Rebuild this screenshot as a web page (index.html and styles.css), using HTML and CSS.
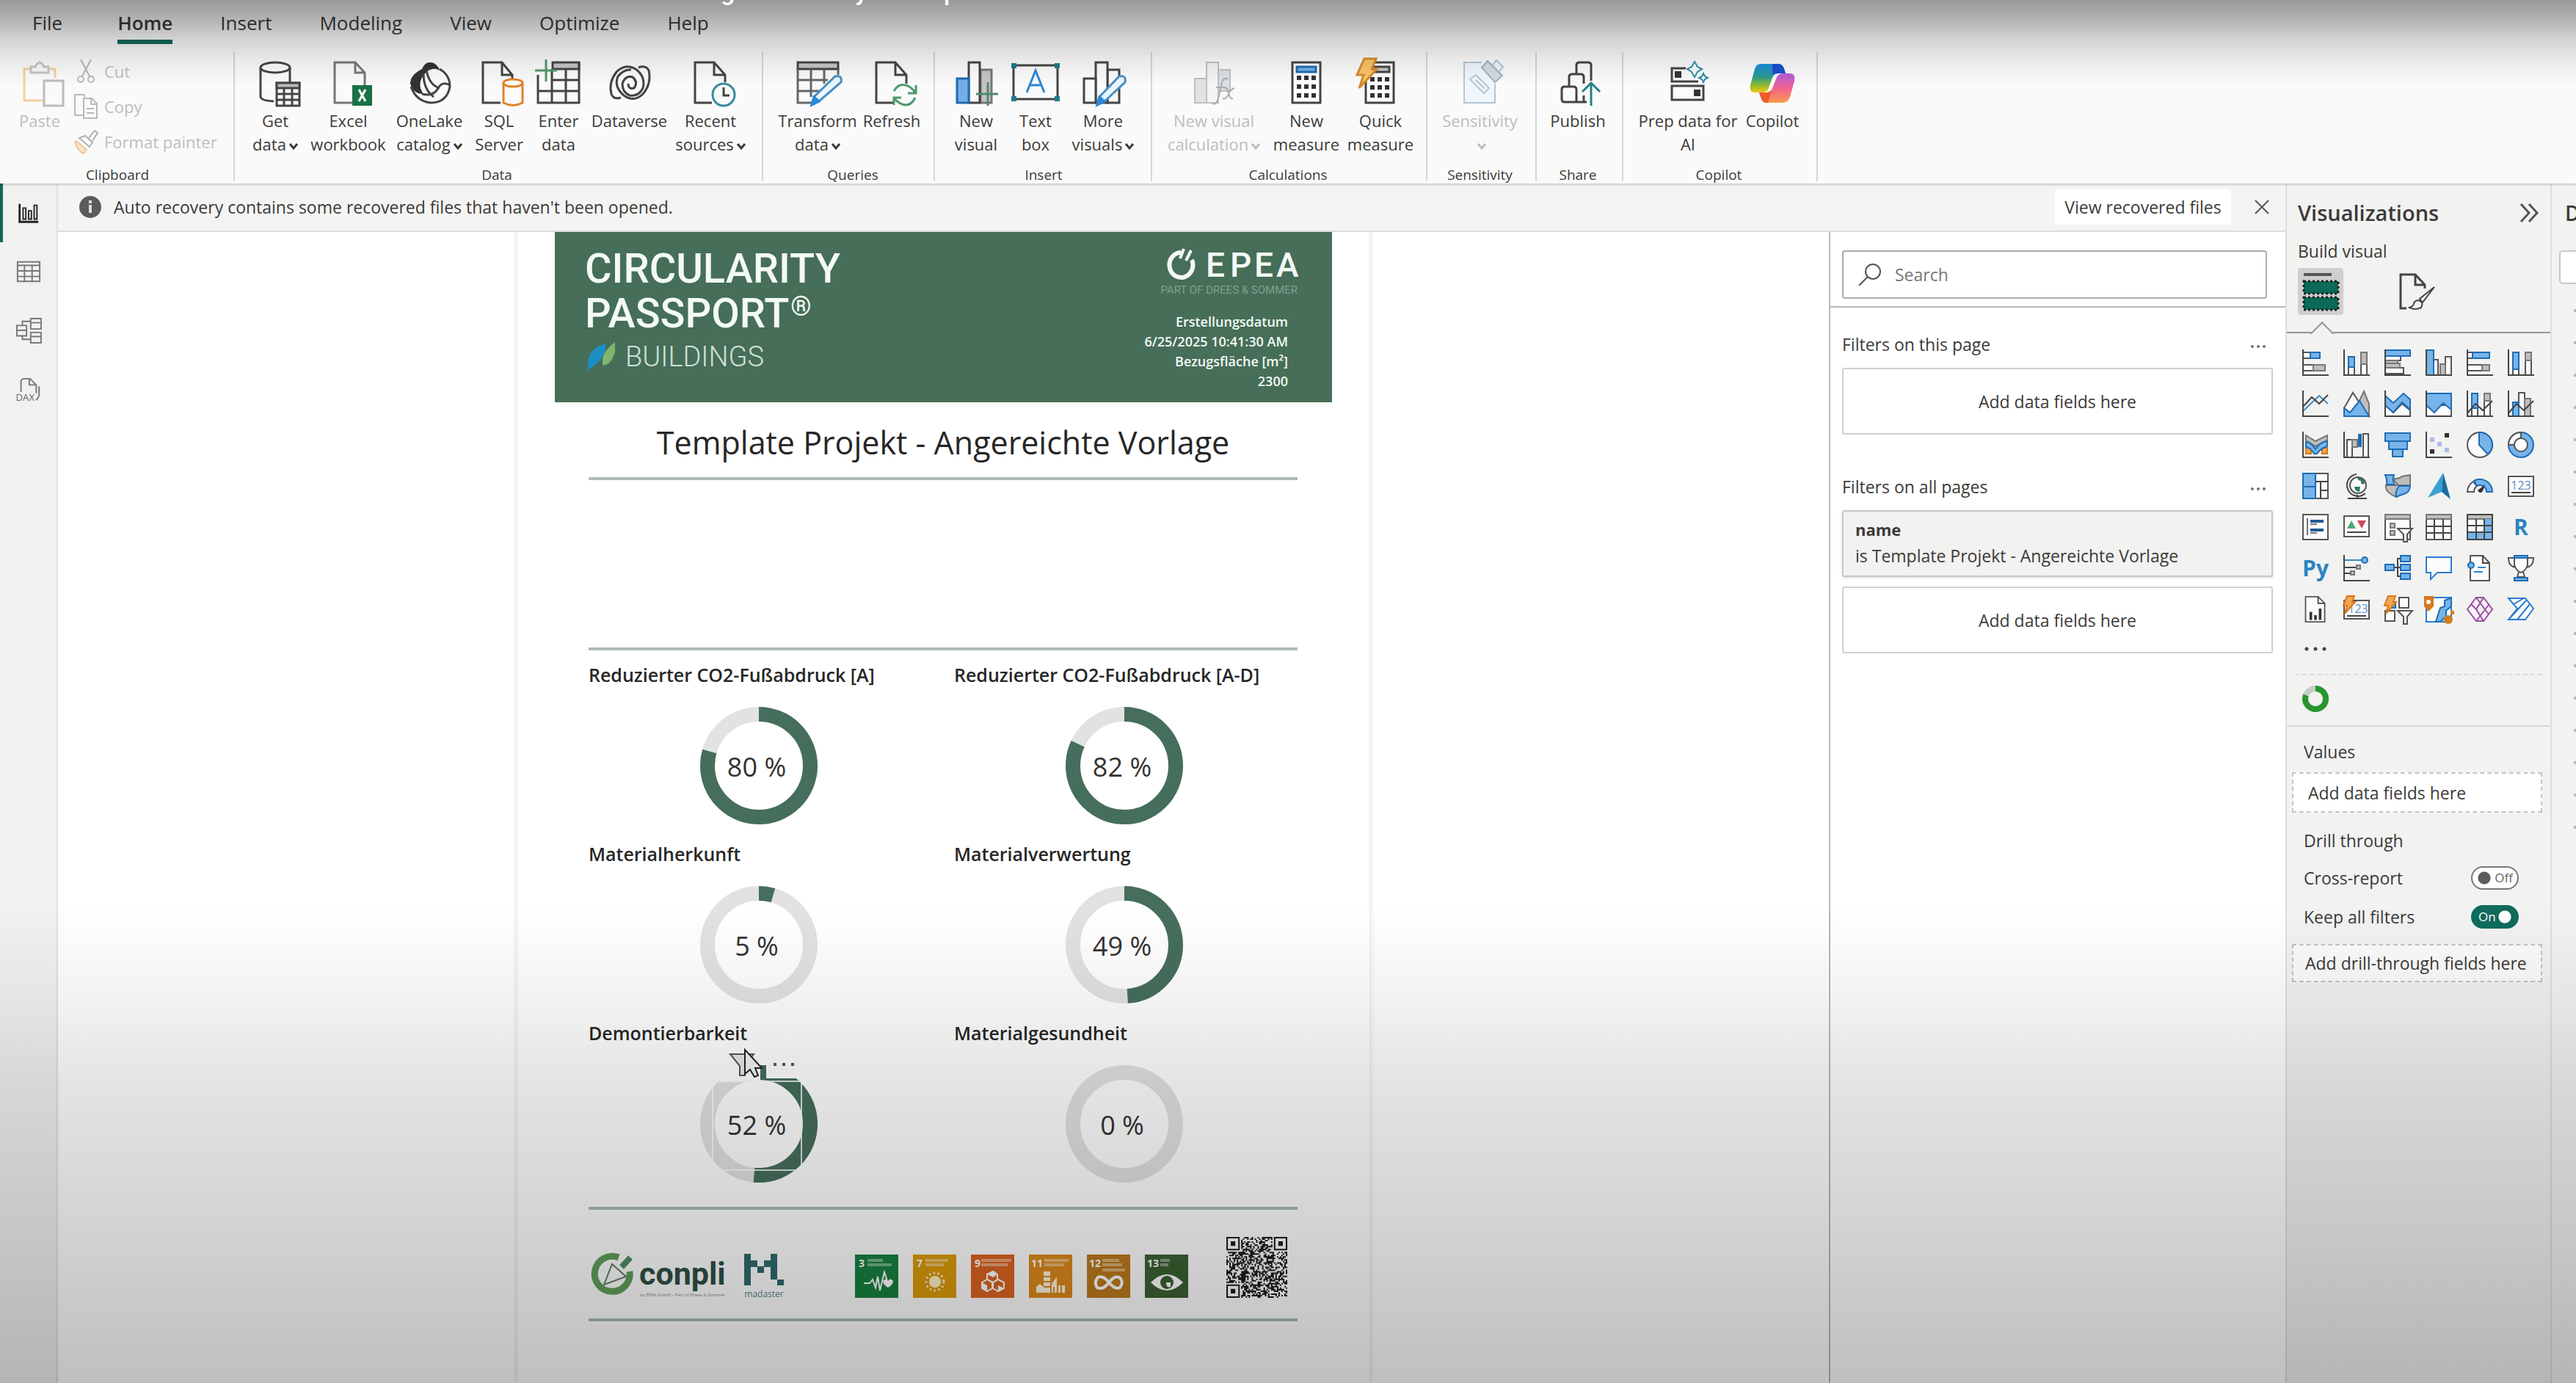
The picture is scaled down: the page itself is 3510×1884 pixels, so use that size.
FILE: index.html
```html
<!DOCTYPE html>
<html lang="en">
<head>
<meta charset="utf-8">
<title>Template Projekt - Angereichte Vorlage</title>
<link rel="stylesheet" href="styles.css">
</head>
<body>
<div class="app">
  <header class="ribbon">
    <nav class="tabs" aria-label="Ribbon tabs">
      <button class="tab tab-file">File</button>
      <button class="tab active">Home</button>
      <button class="tab">Insert</button>
      <button class="tab">Modeling</button>
      <button class="tab">View</button>
      <button class="tab">Optimize</button>
      <button class="tab">Help</button>
    </nav>
    <div class="groups">
      <section class="group group-clipboard">
        <div class="commands">
          <button class="cmd w-narrow" disabled>
            <svg class="ico" viewBox="0 0 64 64"><g fill="none" stroke-width="3"><path d="M20 14H11V57H40M46 14H53V26" stroke="#f2cf9f"/><path d="M20 19V11h6q6-12 12 0h6v8z" stroke="#c4c4c4" fill="#f7f7f7"/><path d="M38 30H64V64H38Z" stroke="#bcbcbc" fill="#fafafa"/></g></svg>
            <span>Paste</span>
          </button>
          <div class="mini">
            <button class="mini-cmd" disabled><svg viewBox="0 0 34 34"><g fill="none" stroke="#b4b8bd" stroke-width="2"><path d="M10 1L22 24M24 1L12 24"/><circle cx="10" cy="28" r="4"/><circle cx="24" cy="28" r="4"/></g></svg>Cut</button>
            <button class="mini-cmd" disabled><svg viewBox="0 0 34 34"><g fill="none" stroke="#b8b8b8" stroke-width="2"><path d="M13 29H2V1H14L16 4"/><path d="M14 6H25L32 13V33H14ZM24 6V14H32M18 20H28M18 26H28"/></g></svg>Copy</button>
            <button class="mini-cmd" disabled><svg viewBox="0 0 34 34"><g fill="none" stroke-width="2"><path d="M4 16L18 28L14 33Q6 30 2 18Z" fill="#fae3c8" stroke="#ecc8a0"/><path d="M8 12L22 24L26 18L16 9ZM21 12L29 2L33 5L26 16" stroke="#b0b0b0"/></g></svg>Format painter</button>
          </div>
        </div>
        <h2>Clipboard</h2>
      </section>
      <section class="group group-data">
        <div class="commands">
          <button class="cmd w-narrow">
            <svg class="ico" viewBox="0 0 64 64"><g class="ln"><ellipse cx="32" cy="12" rx="20" ry="7"/><path d="M12 12V52Q13 57 30 58M52 12V32"/><path d="M34 33H65V64H34Z" fill="#fff"/><path d="M34 33H65V40H34Z" fill="#bbb"/><path d="M34 48H65M34 56H65M44 40V64M55 40V64"/></g></svg>
            <span>Get<br>data<svg class="chev" viewBox="0 0 12 12"><path d="M1 3L6 9L11 3"/></svg></span>
          </button>
          <button class="cmd w-xwide">
            <svg class="ico" viewBox="0 0 64 64"><g class="ln"><path d="M38 60H13V5H41L54 19V36M41 5V19H54" stroke="#777"/></g><path d="M37 36H64V64H37Z" fill="#1a7145"/><path d="M46 42L55 58M55 42L46 58" stroke="#fff" stroke-width="3"/></svg>
            <span>Excel<br>workbook</span>
          </button>
          <button class="cmd w-wide">
            <svg class="ico" viewBox="0 0 64 64"><path d="M22 14Q26 4 34 5Q43 6 46 16Q36 10 26 20Q14 34 24 48Q10 48 6 34Q6 22 22 14Z" fill="#333"/><g class="ln"><path d="M46 14Q60 22 60 38Q56 60 34 60Q14 58 7 38"/><path d="M24 20Q24 42 38 52M22 48Q38 52 44 40Q50 30 60 36M28 16Q32 36 46 40"/></g></svg>
            <span>OneLake<br>catalog<svg class="chev" viewBox="0 0 12 12"><path d="M1 3L6 9L11 3"/></svg></span>
          </button>
          <button class="cmd w-narrow">
            <svg class="ico" viewBox="0 0 64 64"><g class="ln"><path d="M34 60H10V5H36L50 22V28M36 5V22H50"/><g stroke="#e08426"><path d="M38 33V60Q51 67 64 60V33" fill="#fafafa"/><ellipse cx="51" cy="33" rx="13" ry="5" fill="#fafafa"/></g></g></svg>
            <span>SQL<br>Server</span>
          </button>
          <button class="cmd w-thin">
            <svg class="ico" viewBox="0 0 64 64"><g class="ln"><path d="M24 5H60V14H24Z" fill="#c6c6c6"/><path d="M4 22V60H60V5M4 44H60M24 29H60M23 14V60M42 14V60"/><path d="M0 16H30M15 1V31" stroke="#4f9a6c"/></g></svg>
            <span>Enter<br>data</span>
          </button>
          <button class="cmd w-xwide">
            <svg class="ico" viewBox="0 0 64 64"><g class="ln"><path d="M20 53Q10 56 7 48Q3 32 14 18Q26 6 40 14Q54 24 50 40Q44 52 32 50Q22 46 22 34Q26 22 36 25Q44 32 38 40Q30 42 30 34"/><path d="M44 12Q54 8 58 16Q62 34 50 48Q38 60 24 50Q10 38 16 24Q24 14 34 15"/></g></svg>
            <span>Dataverse</span>
          </button>
          <button class="cmd w-wide">
            <svg class="ico" viewBox="0 0 64 64"><g class="ln"><path d="M34 60H11V5H37L52 22V32M37 5V22H52"/><circle cx="50" cy="49" r="15" stroke="#3a8a9c" fill="#fafafa"/><path d="M50 39V50H58"/></g></svg>
            <span>Recent<br>sources<svg class="chev" viewBox="0 0 12 12"><path d="M1 3L6 9L11 3"/></svg></span>
          </button>
        </div>
        <h2>Data</h2>
      </section>
      <section class="group group-queries">
        <div class="commands">
          <button class="cmd w-wide">
            <svg class="ico" viewBox="0 0 64 64"><g class="ln"><path d="M5 5H60V14H5Z" fill="#c6c6c6"/><path d="M60 14V22M5 14V60H24M5 29H46M5 44H34M23 14V52M41 14V34" stroke="#666"/><path d="M56 24Q66 22 64 32L34 58L24 63L27 52Z" stroke="#4a8fc0" fill="#e9f6fd"/><path d="M27 52L34 58L24 63Z" fill="#2b88d8" stroke="#2b88d8"/></g></svg>
            <span>Transform<br>data<svg class="chev" viewBox="0 0 12 12"><path d="M1 3L6 9L11 3"/></svg></span>
          </button>
          <button class="cmd w-mid">
            <svg class="ico" viewBox="0 0 64 64"><g class="ln"><path d="M34 60H11V5H37L52 22V34M37 5V22H52"/><path d="M35 44Q42 32 54 37Q60 40 64 46M65 36V47H54M64 53Q58 66 46 62Q38 58 35 53M35 63V53H45" stroke="#4c9a6d"/></g></svg>
            <span>Refresh</span>
          </button>
        </div>
        <h2>Queries</h2>
      </section>
      <section class="group group-insert">
        <div class="commands">
          <button class="cmd w-narrow">
            <svg class="ico" viewBox="0 0 64 64"><g class="ln"><path d="M38 15H53V60H38Z" fill="#c6c4c2" stroke="#777"/><path d="M22 5H37V60H22Z" fill="#fafafa"/><path d="M6 27H22V60H6Z" fill="#71afe5" stroke="#1f6cb5"/><path d="M48 32V64M32 48H62" stroke="#4c8a6d"/></g></svg>
            <span>New<br>visual</span>
          </button>
          <button class="cmd w-thin">
            <svg class="ico" viewBox="0 0 64 64"><g class="ln"><path d="M2 9H62V55H2Z"/><path d="M20 46L32 16L44 46M25 36H39" stroke="#2b88d8"/></g><path d="M-1 6h7v7h-7zM58 6h7v7h-7zM-1 51h7v7h-7zM58 51h7v7h-7z" fill="#1c7c8c"/></svg>
            <span>Text<br>box</span>
          </button>
          <button class="cmd w-wide">
            <svg class="ico" viewBox="0 0 64 64"><g class="ln"><path d="M38 15H54V60H38Z"/><path d="M22 5H38V60H22Z" fill="#fafafa"/><path d="M6 27H22V60H6Z" fill="#fafafa"/><path d="M54 24Q64 22 62 32L34 58L24 63L27 52Z" stroke="#4a8fc0" fill="#e9f6fd"/><path d="M27 52L34 58L24 63Z" fill="#2b88d8" stroke="#2b88d8"/></g></svg>
            <span>More<br>visuals<svg class="chev" viewBox="0 0 12 12"><path d="M1 3L6 9L11 3"/></svg></span>
          </button>
        </div>
        <h2>Insert</h2>
      </section>
      <section class="group group-calc">
        <div class="commands">
          <button class="cmd w-max" disabled>
            <svg class="ico" viewBox="0 0 64 64"><g fill="none" stroke="#c0c0c0" stroke-width="2"><path d="M38 15H54V44H38Z" fill="#d9dfe4"/><path d="M22 5H38V60H22Z" fill="#f4f4f4"/><path d="M6 27H22V60H6Z" fill="#e2e2e2"/></g><path d="M30 61Q36 64 39 50L43 32Q45 25 51 28M35 39H48M46 40Q50 38 52 46Q54 56 58 54M60 40Q54 42 52 48Q49 56 44 54" fill="none" stroke="#a9acb0" stroke-width="2"/></svg>
            <span>New visual<br>calculation<svg class="chev" viewBox="0 0 12 12"><path d="M1 3L6 9L11 3"/></svg></span>
          </button>
          <button class="cmd w-wide">
            <svg class="ico" viewBox="0 0 64 64"><g class="ln"><path d="M13 5H51V60H13Z" fill="#fff"/><path d="M19 11H45V18H19Z" fill="#71afe5" stroke="#1f6cb5"/></g><path d="M19 23h6v6h-6zM29 23h6v6h-6zM39 23h6v6h-6zM19 35h6v6h-6zM29 35h6v6h-6zM39 35h6v6h-6zM19 47h6v6h-6zM29 47h6v6h-6zM39 47h6v6h-6z" fill="#333"/></svg>
            <span>New<br>measure</span>
          </button>
          <button class="cmd w-mid">
            <svg class="ico" viewBox="0 0 64 64"><g class="ln"><path d="M12 5H50V60H12Z" fill="#fff"/><path d="M18 11H44V18H18Z" fill="#c6c6c6"/></g><path d="M18 25h6v6h-6zM28 25h6v6h-6zM38 25h6v6h-6zM18 36h6v6h-6zM28 36h6v6h-6zM38 36h6v6h-6zM18 47h6v6h-6zM28 47h6v6h-6zM38 47h6v6h-6z" fill="#333"/><path d="M10 0H26L20 14H27L3 40L9 22H0Z" fill="#f9c46b" stroke="#d98a2b" stroke-width="3"/></svg>
            <span>Quick<br>measure</span>
          </button>
        </div>
        <h2>Calculations</h2>
      </section>
      <section class="group group-sens">
        <div class="commands">
          <button class="cmd w-xwide" disabled>
            <svg class="ico" viewBox="0 0 64 64"><g fill="none" stroke="#b3c6d4" stroke-width="2"><path d="M34 5H10V60H52V34" fill="#f1f6fa"/><path d="M26 22L44 40L37 47L18 28Z"/><path d="M26 29L38 41"/><path d="M34 12L42 3L62 23L52 32Z" fill="#d3dbe1" stroke="#9fb2bf"/><path d="M49 8L54 2L63 11L58 17" fill="#eef3f6"/></g></svg>
            <span>Sensitivity<br><svg class="chev" viewBox="0 0 12 12"><path d="M1 3L6 9L11 3"/></svg></span>
          </button>
        </div>
        <h2>Sensitivity</h2>
      </section>
      <section class="group group-share">
        <div class="commands">
          <button class="cmd w-mid">
            <svg class="ico" viewBox="0 0 64 64"><g class="ln"><path d="M10 42q0-4 4-4h12q4 0 4 4V59H14q-4 0-4-4zM20 37V25q0-4 4-4h12q4 0 4 4V34M40 50V59M30 59H44M30 20V9q0-4 4-4h12q4 0 4 4V30"/><path d="M50 64V33M38 45L50 33L62 45" stroke="#27808c"/></g></svg>
            <span>Publish</span>
          </button>
        </div>
        <h2>Share</h2>
      </section>
      <section class="group group-copilot">
        <div class="commands">
          <button class="cmd w-max">
            <svg class="ico" viewBox="0 0 64 64"><g class="ln"><path d="M29 13H10V31H46M10 37H53V56H10Z"/><g stroke="#2d8fa5" stroke-width="2"><path d="M41 4L45 11L51 14L45 18L41 25L37 18L31 14L37 11Z"/><path d="M53 20L55 24L59 26L55 28L53 32L51 28L47 26L51 24Z"/></g></g><path d="M14 17h9v9h-9zM40 42h9v9h-9z" fill="#333"/></svg>
            <span>Prep data for<br>AI</span>
          </button>
          <button class="cmd w-narrow">
            <svg class="ico" viewBox="0 0 64 64"><defs><linearGradient id="cpA" x1="0" y1="0" x2="0" y2="1"><stop offset="0" stop-color="#1a8fe3"/><stop offset=".45" stop-color="#2a9a8f"/><stop offset=".75" stop-color="#8fba2c"/><stop offset="1" stop-color="#f3c916"/></linearGradient><linearGradient id="cpB" x1="0" y1="0" x2="0" y2="1"><stop offset="0" stop-color="#b05ee0"/><stop offset=".5" stop-color="#f0628e"/><stop offset="1" stop-color="#fb9a4b"/></linearGradient></defs><path d="M16 7H40Q46 7 48 14L50 20H40Q34 20 32 26L26 42Q24 46 18 46H8Q0 46 2 36L8 14Q10 7 16 7Z" fill="url(#cpA)"/><path d="M32 7H40Q46 7 48 14L50 20H40Q34 20 32 22Z" fill="#1a4fd0"/><path d="M49 20H56Q64 20 62 30L56 52Q53 60 46 60H24Q18 60 16 52L14 46H24Q30 46 32 40L38 25Q40 20 49 20Z" fill="url(#cpB)"/><path d="M14 46H24Q28 46 31 42L26 60H24Q18 60 16 52Z" fill="#ee5a2c"/></svg>
            <span>Copilot</span>
          </button>
        </div>
        <h2>Copilot</h2>
      </section>
    </div>
  </header>

  <div class="workspace">
    <nav class="rail" aria-label="Views">
      <button class="rail-btn active" aria-label="Report view"><svg viewBox="0 0 36 36"><g fill="none" stroke="#222" stroke-width="3"><path d="M5 5V31H32"/><path d="M10 11h4v16h-4zM18 15h4v12h-4zM26 7h4v20h-4z" stroke-width="2"/></g></svg></button>
      <button class="rail-btn" aria-label="Table view"><svg viewBox="0 0 36 36"><g fill="none" stroke="#777" stroke-width="2"><path d="M2 4H34V32H2ZM2 9H34M2 17H34M2 25H34M12 9V32M23 9V32"/></g></svg></button>
      <button class="rail-btn" aria-label="Model view"><svg viewBox="0 0 36 36"><g fill="none" stroke="#777" stroke-width="2"><path d="M1 11H15V26H1ZM1 18H15M21 1H36V16H21ZM21 7H36M21 21H36V36H21ZM21 27H36M9 11V5H21M9 26V31H21"/></g></svg></button>
      <button class="rail-btn" aria-label="DAX query view"><svg viewBox="0 0 36 36"><path d="M7 22V6L10 3H20L29 12V24M19 3V12H29M33 14V28L29 34" fill="none" stroke="#777" stroke-width="2"/><text x="13" y="35" text-anchor="middle">DAX</text></svg></button>
    </nav>

    <div class="center">
      <div class="notice" role="status">
        <svg class="info" viewBox="0 0 32 32"><circle cx="16" cy="16" r="15" fill="#5b5b5b"/><path d="M14 13h4v11h-4zM14 7h4v4h-4z" fill="#ddd"/></svg>
        <p>Auto recovery contains some recovered files that haven't been opened.</p>
        <button class="notice-btn">View recovered files</button>
        <button class="close" aria-label="Close"><svg viewBox="0 0 20 20"><path d="M1 1L19 19M19 1L1 19"/></svg></button>
      </div>
      <div class="stage">
        <main class="canvas">
          <article class="report">
            <header class="banner">
              <div class="banner-left">
                <h1>CIRCULARITY<br>PASSPORT<sup>®</sup></h1>
                <p><svg viewBox="0 0 40 36"><path d="M1 36V22Q4 12 14 4L25 0V10Q20 22 10 30Z" fill="#1b8fc4"/><path d="M21 30V20Q24 8 38 -2V12Q34 24 28 28Z" fill="#7fb56f"/></svg>BUILDINGS</p>
              </div>
              <div class="banner-right">
                <svg class="epea" viewBox="0 0 182 66"><path d="M22 8A16 17 0 1 0 37 18" fill="none" stroke="#f4faf6" stroke-width="6"/><path d="M21 16L26 3M29 19L36 5" stroke="#f4faf6" stroke-width="4"/><g class="epea-name"><text x="56" y="41">E</text><text x="89" y="41">P</text><text x="122" y="41">E</text><text x="152" y="41">A</text></g><text class="epea-sub" x="181" y="64" text-anchor="end">PART OF DREES &amp; SOMMER</text></svg>
                <p>Erstellungsdatum<br>6/25/2025 10:41:30 AM<br>Bezugsfläche [m²]<br>2300</p>
              </div>
            </header>
            <div class="sheet">
              <h2 class="title">Template Projekt - Angereichte Vorlage</h2>
              <hr>
              <div class="blank"></div>
              <hr>
              <div class="kpis">
                <section><h3>Reduzierter CO2-Fußabdruck [A]</h3>
                  <svg class="donut" viewBox="0 0 160 160"><circle class="bg" cx="80" cy="80" r="70"/><circle class="fg" cx="80" cy="80" r="70" pathLength="100" stroke-dasharray="79.5 100"/><text x="77" y="95">80 %</text></svg></section>
                <section><h3>Reduzierter CO2-Fußabdruck [A-D]</h3>
                  <svg class="donut" viewBox="0 0 160 160"><circle class="bg" cx="80" cy="80" r="70"/><circle class="fg" cx="80" cy="80" r="70" pathLength="100" stroke-dasharray="82 100"/><text x="77" y="95">82 %</text></svg></section>
                <section><h3>Materialherkunft</h3>
                  <svg class="donut" viewBox="0 0 160 160"><circle class="bg" cx="80" cy="80" r="70"/><circle class="fg" cx="80" cy="80" r="70" pathLength="100" stroke-dasharray="4.5 100"/><text x="77" y="95">5 %</text></svg></section>
                <section><h3>Materialverwertung</h3>
                  <svg class="donut" viewBox="0 0 160 160"><circle class="bg" cx="80" cy="80" r="70"/><circle class="fg" cx="80" cy="80" r="70" pathLength="100" stroke-dasharray="49 100"/><text x="77" y="95">49 %</text></svg></section>
                <section><h3>Demontierbarkeit</h3>
                  <svg class="donut" viewBox="0 0 160 160"><circle class="bg" cx="80" cy="80" r="70"/><circle class="fg" cx="80" cy="80" r="70" pathLength="100" stroke-dasharray="51.5 100"/><path d="M28 -6H82V20L28 22ZM90 -6H140V18H90Z" fill="#fff"/><path d="M82 0H90V20H82Z" fill="#466e5c"/><path d="M94 21H135V23H94Z" fill="#466e5c"/><path d="M17 22H138V143H17Z" fill="none" stroke="#fff" stroke-width="2" opacity=".8"/><text x="77" y="95">52 %</text>
                    <path d="M41 -15H73L61 1V14H54V1Z" fill="#e9e9e9" stroke="#555" stroke-width="2"/><path d="M61 -21V12L68 6L74 16L79 14L75 4H84Z" fill="#f4f4f4" stroke="#222" stroke-width="2"/><path d="M100 -3h4v4h-4zM112 -3h4v4h-4zM124 -3h4v4h-4z" fill="#555"/></svg></section>
                <section><h3>Materialgesundheit</h3>
                  <svg class="donut" viewBox="0 0 160 160"><circle class="bg" cx="80" cy="80" r="70"/><text x="77" y="95">0 %</text></svg></section>
              </div>
              <hr>
              <footer class="partners">
                <svg class="conpli" viewBox="0 0 186 60"><path d="M36 5A24 24 0 1 0 51 24" fill="none" stroke="#5fa05b" stroke-width="9"/><path d="M40 18L52 5" stroke="#4c9160" stroke-width="8"/><path d="M27 14L46 31L16 42Z" fill="none" stroke="#5f7f66" stroke-width="2"/><text class="conpli-name" x="64" y="42">conpli</text><text class="conpli-sub" x="65" y="58">by EPEA GmbH – Part of Drees &amp; Sommer</text></svg>
                <svg class="madaster" viewBox="0 0 54 60"><path d="M0 0h9v43h-9zM9 9h9v9h-9zM18 17h9v9h-9zM27 9h9v9h-9zM36 0h9v35h-9zM45 35h9v8h-9z" fill="#2f6a6c"/><text x="27" y="59" text-anchor="middle">madaster</text></svg>
                <div class="sdgs">
                  <svg viewBox="0 0 59 59"><path fill="#17813f" d="M0 0h59v59H0z"/><text x="5" y="17">3</text><path class="cap" d="M17 8H38M17 14H50"/><path class="wh" d="M12 39H20L24 34L28 45L31 30L34 49L40 24L44 36"/><path fill="#fff" d="M38 36q5-5 7 0q3-5 7 0q0 5-7 9q-7-4-7-9"/></svg>
                  <svg viewBox="0 0 59 59"><path fill="#dc9c0a" d="M0 0h59v59H0z"/><text x="5" y="17">7</text><path class="cap" d="M17 8H48M17 14H42"/><circle cx="30" cy="37" r="8" fill="#fff2c8"/><circle cx="30" cy="37" r="12" fill="none" stroke="#fff" stroke-width="3" stroke-dasharray="2 4"/></svg>
                  <svg viewBox="0 0 59 59"><path fill="#de6420" d="M0 0h59v59H0z"/><text x="5" y="17">9</text><path class="cap" d="M14 8H55M14 14H50"/><path class="wh" d="M22 27L30 23L36 27V34L30 38L22 34ZM15 38L22 34L29 38V46L22 50L15 46ZM30 38L37 34L45 38V46L37 50L30 46Z"/><path d="M22 27L30 23L36 27L30 31ZM15 38L22 42V50L15 46ZM37 42L45 46L37 50Z" fill="#fff"/></svg>
                  <svg viewBox="0 0 59 59"><path fill="#de8a1c" d="M0 0h59v59H0z"/><text x="3" y="17">11</text><path class="cap" d="M21 8H54M21 14H48"/><path d="M10 52V44L15 40L20 44V23H29V52H31V40L38 30V52H40V42H49V52Z" fill="#fff5dc"/><path d="M20 30H29M20 37H29M20 44H29M34 44V52M44 42V52" stroke="#de8a1c" stroke-width="2"/></svg>
                  <svg viewBox="0 0 59 59"><path fill="#be7a1c" d="M0 0h59v59H0z"/><text x="3" y="17">12</text><path class="cap" d="M21 8H44M21 14H48M21 21H52"/><path d="M30 38Q40 26 46 33Q50 39 45 45Q38 48 30 38Q22 28 15 31Q9 38 14 45Q22 49 30 38" fill="none" stroke="#fff" stroke-width="4"/></svg>
                  <svg viewBox="0 0 59 59"><path fill="#3a6132" d="M0 0h59v59H0z"/><text x="3" y="17">13</text><path class="cap" d="M21 8H34M21 14H32"/><path d="M8 38Q30 16 52 38Q30 60 8 38Z" fill="#fff"/><circle cx="30" cy="38" r="9" fill="#3a6132"/><path d="M29 38h6v6q-6 2-6-6" fill="#fff"/></svg>
                </div>
                <svg class="qr" id="qr" viewBox="0 0 41 41" role="img" aria-label="QR code"></svg>
              </footer>
              <hr>
            </div>
          </article>
        </main>

        <aside class="filters" aria-label="Filters">
          <div class="search-wrap">
            <label class="search"><svg viewBox="0 0 32 32"><g fill="none" stroke="#555" stroke-width="2"><circle cx="20" cy="12" r="10"/><path d="M13 19L1 31"/></g></svg><input type="search" placeholder="Search" aria-label="Search filters"></label>
          </div>
          <section>
            <div class="filter-head"><h3>Filters on this page</h3><button class="more" aria-label="More options"></button></div>
            <div class="drop">Add data fields here</div>
          </section>
          <section>
            <div class="filter-head"><h3>Filters on all pages</h3><button class="more" aria-label="More options"></button></div>
            <div class="filter-card"><b>name</b><span>is Template Projekt - Angereichte Vorlage</span></div>
            <div class="drop">Add data fields here</div>
          </section>
        </aside>
      </div>
    </div>

    <aside class="viz" aria-label="Visualizations">
      <div class="viz-head"><h2>Visualizations</h2><button aria-label="Collapse pane"><svg viewBox="0 0 26 26"><path d="M2 1L13 13L2 25M13 1L24 13L13 25"/></svg></button></div>
      <h3 class="build">Build visual</h3>
      <div class="modes">
        <button class="mode on" aria-label="Build visual"><svg viewBox="0 0 62 64"><path d="M8 9H46" stroke="#555" stroke-width="4"/><path d="M8 18h47v17H8zM8 40h47v17H8z" fill="#0b6a58" stroke="#222" stroke-width="3" stroke-dasharray="3 3"/></svg></button>
        <button class="mode" aria-label="Format visual"><svg viewBox="0 0 62 64"><g fill="none" stroke="#444" stroke-width="3"><path d="M16 55H8V9H28L41 23V28M28 9V23H41"/><path d="M54 26L34 42L38 47ZM32 44Q40 46 36 54Q28 58 20 54Q26 52 26 48Q28 44 32 44" stroke-width="2"/></g></svg></button>
      </div>
      <div class="notch"></div>
      <div class="gallery">
        <button aria-label="Stacked bar chart"><svg viewBox="0 0 36 36"><path class="w" d="M1 4h10v8H1zM1 21h14v8H1z"/><path class="b" d="M11 4h13v8H11z"/><path class="g" d="M15 21h16v8H15z"/><path class="k" d="M1 0V35H36"/></svg></button>
        <button aria-label="Stacked column chart"><svg viewBox="0 0 36 36"><path class="w" d="M7 24h8v11H7zM24 20h8v15h-8z"/><path class="b" d="M7 10h8v14H7z"/><path class="g" d="M24 4h8v16h-8z"/><path class="k" d="M1 0V35H36"/></svg></button>
        <button aria-label="Clustered bar chart"><svg viewBox="0 0 36 36"><path class="w" d="M1 9h21v6H1zM1 25h25v8H1z"/><path class="b" d="M1 1h34v8H1z"/><path class="g" d="M1 15h17v4H1zM1 19h20v6H1z"/><path class="k" d="M1 0V35H36"/></svg></button>
        <button aria-label="Clustered column chart"><svg viewBox="0 0 36 36"><path class="w" d="M11 14h6v21h-6zM27 10h8v25h-8z"/><path class="b" d="M1 1h10v34H1z"/><path class="g" d="M20 20h7v15h-7z"/><path class="k" d="M1 0V35H36"/></svg></button>
        <button aria-label="100% stacked bar chart"><svg viewBox="0 0 36 36"><path class="w" d="M1 4h7v8H1zM1 21h20v8H1z"/><path class="b" d="M8 4h23v8H8z"/><path class="g" d="M21 21h10v8H21z"/><path class="k" d="M1 0V35H36"/></svg></button>
        <button aria-label="100% stacked column chart"><svg viewBox="0 0 36 36"><path class="w" d="M7 27h8v8H7zM24 15h8v20h-8z"/><path class="b" d="M7 4h8v23H7z"/><path class="g" d="M24 4h8v11h-8z"/><path class="k" d="M1 0V35H36"/></svg></button>

        <button aria-label="Line chart"><svg viewBox="0 0 36 36"><path class="bl" d="M1 28L23 7L35 18"/><path class="k" d="M1 22L13 9L23 18L35 6M1 0V35H36"/></svg></button>
        <button aria-label="Area chart"><svg viewBox="0 0 36 36"><path class="g" d="M20 18L28 1L35 18V35Z"/><path class="w" d="M1 24L13 3L24 20L12 32Z"/><path class="b" d="M1 24L9 30L22 14L35 35H1Z"/></svg></button>
        <button aria-label="Stacked area chart"><svg viewBox="0 0 36 36"><path class="w" d="M1 18L12 30L24 18L35 27V35H1Z"/><path class="b" d="M1 7L12 17L26 4L35 12V26L24 16L12 30L1 20Z"/><path class="k" d="M1 0V35H36"/></svg></button>
        <button aria-label="100% stacked area chart"><svg viewBox="0 0 36 36"><path class="w" d="M1 20H35V35H1Z" stroke="none"/><path class="b" d="M1 4H35V26L24 17L12 30L1 20Z"/><path class="k" d="M1 0V35H36"/></svg></button>
        <button aria-label="Line and stacked column chart"><svg viewBox="0 0 36 36"><path class="w" d="M7 22h8v13H7zM24 14h8v21h-8z"/><path class="b" d="M7 4h8v20H7z"/><path class="g" d="M24 4h8v10h-8z"/><path class="k" d="M1 0V35H36M1 31L12 18L22 27L35 14"/></svg></button>
        <button aria-label="Line and clustered column chart"><svg viewBox="0 0 36 36"><path class="w" d="M15 3h8v32h-8z"/><path class="b" d="M7 16h8v19H7z"/><path class="g" d="M23 11h8v24h-8z"/><path class="k" d="M1 0V35H36M1 31L12 18L22 27L35 14"/></svg></button>

        <button aria-label="Ribbon chart"><svg viewBox="0 0 36 36"><path d="M5 22h7v8H5zM27 22h7v8h-7z" class="o"/><path class="g" d="M5 5L18 13L34 5V12L18 20L5 12Z"/><path class="b" d="M5 14Q12 14 18 24Q24 14 34 13V20Q26 22 20 30H16Q12 22 5 21Z"/><path class="k" d="M1 0V35H36"/></svg></button>
        <button aria-label="Waterfall chart"><svg viewBox="0 0 36 36"><path class="w" d="M5 11h7v24H5zM27 3h7v32h-7z"/><path class="g" d="M12 11h7v10h-7z"/><path d="M20 3h5v18h-5z" fill="#1f6cb5"/><path class="k" d="M1 0V35H36"/></svg></button>
        <button aria-label="Funnel chart"><svg viewBox="0 0 36 36"><path class="b" d="M1 2h34v11H1zM6 13h25v11H6zM11 24h14v10H11z"/></svg></button>
        <button aria-label="Scatter chart"><svg viewBox="0 0 36 36"><path class="k" d="M1 0V35H36"/><path fill="#333" d="M26 2h6v6h-6zM6 24h6v6H6z"/><path fill="#a9bbe8" d="M6 8h6v6H6zM16 14h6v6h-6zM26 22h6v6h-6z"/></svg></button>
        <button aria-label="Pie chart"><svg viewBox="0 0 36 36"><circle class="w" cx="18" cy="18" r="17"/><path class="b" d="M18 1A17 17 0 0 1 29 31L17 18V1"/></svg></button>
        <button aria-label="Donut chart"><svg viewBox="0 0 36 36"><circle class="b" cx="18" cy="18" r="17"/><path class="w" d="M18 1A17 17 0 0 0 1 18H9A9 9 0 0 1 18 9Z"/><circle class="w" cx="18" cy="18" r="9"/></svg></button>

        <button aria-label="Treemap"><svg viewBox="0 0 36 36"><path class="w" d="M18 1h17v34H18z"/><path class="b" d="M1 1h17v34H1zM1 19h17"/><path class="k" d="M18 12H35M25 12V35M25 24H35"/></svg></button>
        <button aria-label="Map"><svg viewBox="0 0 36 36"><circle class="w" cx="20" cy="17" r="11"/><path d="M19 7q9-1 10 8q-6 2-5-4q-4 0-5-4M15 19h8l-1 7q-7-1-7-7" fill="#2f7d57"/><path class="k" d="M18 2A15 15 0 1 0 30 28M19 30V35M6 35H32"/></svg></button>
        <button aria-label="Filled map"><svg viewBox="0 0 36 36"><path class="g" d="M10 7Q18 10 24 5L35 3V17H2Q0 26 16 33L20 18Z"/><path class="b" d="M1 3H13Q10 10 14 16H3Q4 9 1 3ZM20 18H35Q34 28 26 29L16 33Q14 26 20 18Z"/></svg></button>
        <button aria-label="Azure map"><svg viewBox="0 0 36 36"><path d="M24 0L3 34L22 26Z" fill="#3aa0d0"/><path d="M24 0L34 36L22 26Z" fill="#1c6a9e"/></svg></button>
        <button aria-label="Gauge"><svg viewBox="0 0 36 36"><path class="w" d="M1 26A17 17 0 0 1 9 12L14 18A10 10 0 0 0 10 26Z"/><path class="b" d="M10 11A17 17 0 0 1 35 26H27A9 9 0 0 0 14 18Z"/><path fill="#333" d="M25 16L15 24Q18 30 22 25Z"/></svg></button>
        <button aria-label="Card"><svg viewBox="0 0 36 36"><path class="w" d="M1 5H35V32H1Z"/><path class="k" d="M5 27H31"/><text class="num" x="18" y="23" text-anchor="middle">123</text></svg></button>

        <button aria-label="Multi-row card"><svg viewBox="0 0 36 36"><path class="w" d="M1 1H35V35H1Z"/><path d="M7 6V29M11 14H20M11 26H20" stroke="#777" stroke-width="2"/><path d="M11 10H29M11 22H29" stroke="#1d5a96" stroke-width="4"/></svg></button>
        <button aria-label="KPI"><svg viewBox="0 0 36 36"><path class="w" d="M1 3H35V31H1Z"/><path d="M5 20L11 9L17 20Z" fill="#4ca877"/><path d="M19 9H31L25 20Z" fill="#cf4a58"/><path class="k" d="M5 25H31"/></svg></button>
        <button aria-label="Slicer"><svg viewBox="0 0 36 36"><path class="w" d="M1 1H35V35H1Z"/><path class="g" d="M1 1H35V7H1ZM8 13h6v6H8zM8 23h6v6H8z"/><path class="w" d="M18 20H38L31 28V38H26V28Z"/></svg></button>
        <button aria-label="Table"><svg viewBox="0 0 36 36"><path class="w" d="M1 1H35V35H1Z"/><path class="g" d="M1 1H35V7H1Z"/><path class="k" d="M1 17H35M1 26H35M12 7V35M24 7V35"/></svg></button>
        <button aria-label="Matrix"><svg viewBox="0 0 36 36"><path class="w" d="M1 1H35V35H1Z"/><path class="g" d="M1 1H35V7H1Z"/><path d="M24 7H35V35H1V24H24Z" fill="#76b4ea"/><path class="k" d="M1 1H35V35H1ZM1 16H35M1 25H35M13 7V35M24 7V35"/></svg></button>
        <button aria-label="R script visual" class="script">R</button>

        <button aria-label="Python visual" class="script">Py</button>
        <button aria-label="Key influencers"><svg viewBox="0 0 36 36"><path class="bl" d="M1 7H24"/><path class="k" d="M1 17H18M1 25H10M1 0V35H36"/><circle class="b" cx="29" cy="7" r="4"/><path class="g" d="M18 14h5v5h-5zM10 22h5v5h-5z"/></svg></button>
        <button aria-label="Decomposition tree"><svg viewBox="0 0 36 36"><path class="k" d="M13 17H22M22 5H18V29H22"/><path class="b" d="M1 13h12v8H1zM22 1h13v8H22zM22 13h13v8H22zM22 25h13v8H22z"/></svg></button>
        <button aria-label="Q&amp;A"><svg viewBox="0 0 36 36"><path class="w bs" d="M1 3H35V24H16L7 33V24H1Z"/></svg></button>
        <button aria-label="Narrative"><svg viewBox="0 0 36 36"><path class="w" d="M5 1H22L31 11V35H5Z"/><path class="k" d="M22 1V11H31"/><path d="M15 17H26M10 23H22" stroke="#2b88d8" stroke-width="2"/><circle class="b" cx="6" cy="14" r="4"/></svg></button>
        <button aria-label="Goals"><svg viewBox="0 0 36 36"><path class="w" d="M9 2H27V14Q24 22 18 24Q12 22 9 14ZM9 4H1Q1 16 11 17M27 4H35Q35 16 25 17M15 23L13 30H23L21 23"/><path class="b" d="M9 1H27V4H9ZM9 31H27V35H9Z"/></svg></button>

        <button aria-label="Paginated report"><svg viewBox="0 0 36 40"><path class="w" d="M3 1H22L32 11V39H3Z"/><path class="k" d="M22 1V11H32"/><path d="M11 24V36M18 29V36M25 19V36" stroke="#333" stroke-width="4"/></svg></button>
        <button aria-label="Card (new)"><svg viewBox="0 0 36 36"><path class="w" d="M1 6H35V31H1Z"/><path class="k" d="M5 27H31"/><text class="num" x="20" y="23" text-anchor="middle">123</text><path class="o" d="M5 0H15L12 8H16L2 24L5 13H0Z"/></svg></button>
        <button aria-label="Slicer (new)"><svg viewBox="0 0 36 36"><path class="w" d="M20 2H33V16H20ZM1 20H14V34H1Z"/><path class="b" d="M8 8h7v8H8z"/><path class="w" d="M18 20H38L31 28V38H26V28Z"/><path class="o" d="M5 0H15L12 8H16L2 24L5 13H0Z"/></svg></button>
        <button aria-label="ArcGIS map"><svg viewBox="0 0 36 36"><path class="w bs" d="M1 2H35V35H1Z"/><path class="b" d="M35 2V14L28 20V28L20 35H14L20 16L26 14V6Z"/><path d="M-2 0H11V14L4 21L-2 14Z" fill="#d9761a"/><circle cx="4" cy="8" r="3" fill="#fff"/><circle cx="31" cy="32" r="6" fill="#d08020"/><path d="M34 20h5v5h-5z" fill="#d08020"/></svg></button>
        <button aria-label="Power Apps"><svg viewBox="0 0 36 36"><path d="M13 2H23L35 18L23 34H13L1 18ZM13 2L30 25M23 2L13 18L23 34M13 34L30 12M6 11L13 18" fill="#fbf1fa" stroke="#9a4f9e" stroke-width="2"/></svg></button>
        <button aria-label="Power Automate"><svg viewBox="0 0 36 36"><path class="w bs" d="M1 3H24L35 17L24 32H1L13 17ZM8 11L22 3M1 32L25 6M13 32L30 11"/></svg></button>
      </div>
      <button class="dots" aria-label="Get more visuals"></button>
      <div class="custom"><svg viewBox="0 0 36 36"><circle cx="18" cy="18" r="14" fill="none" stroke="#c8cdc8" stroke-width="8"/><path d="M18 4A14 14 0 1 1 5 13" fill="none" stroke="#27962d" stroke-width="8"/></svg></div>
      <div class="wells">
        <h4>Values</h4>
        <div class="well">Add data fields here</div>
        <h4 class="strong">Drill through</h4>
        <label class="switch">Cross-report<span class="toggle"><input type="checkbox" role="switch"><i>Off</i></span></label>
        <label class="switch">Keep all filters<span class="toggle"><input type="checkbox" role="switch" checked><i>On</i></span></label>
        <div class="well well-drill">Add drill-through fields here</div>
      </div>
    </aside>

    <aside class="data" aria-label="Data">
      <h2>D</h2>
      <div class="data-search"></div>
      <ul><li></li><li></li><li></li><li></li><li></li><li></li><li></li><li></li><li></li><li></li><li></li><li></li><li></li><li></li><li></li><li></li><li></li></ul>
    </aside>
  </div>
  <div class="video-title"><span>g</span><span>y</span><span>p</span></div>
  <div class="shade shade-top"></div>
  <div class="shade shade-bottom"></div>
</div>
<script src="qr.js"></script>
</body>
</html>
```
FILE: styles.css
```css
* { box-sizing: border-box; }
body { margin: 0; font-family: "Open Sans", "Liberation Sans", sans-serif; font-size: 22px; line-height: 32px; color: #3b3a39; background: #fff; }
button { font: inherit; color: inherit; background: none; border: 0; padding: 0; margin: 0; }
h1, h2, h3, h4, p, ul { margin: 0; padding: 0; font-weight: 400; font-size: inherit; }
svg { display: block; overflow: visible; flex: none; }

.app { position: relative; display: flex; flex-direction: column; min-height: 100vh; overflow: hidden; }
.shade { position: absolute; left: 0; right: 0; z-index: 2; pointer-events: none; }
.shade-top { top: 0; height: 116px; background: linear-gradient(rgba(0,0,0,.39), rgba(0,0,0,.31) 18%, rgba(0,0,0,.17) 44%, rgba(0,0,0,.07) 70%, transparent); }
.shade-bottom { bottom: 0; height: 650px; background: linear-gradient(transparent, rgba(0,0,0,.06) 22%, rgba(0,0,0,.11) 38%, rgba(0,0,0,.18) 70%, rgba(0,0,0,.25)); }
.video-title { position: absolute; top: -32px; left: 982px; display: flex; gap: 164px; font: 500 34px/40px Roboto, sans-serif; color: #fff; z-index: 3; }
.video-title span:last-child { margin-left: -60px; }

/* Ribbon */
.ribbon { background: #fafafa; box-shadow: 0 1px 4px rgba(0,0,0,.25); position: relative; z-index: 1; }
.tabs { display: flex; gap: 65px; padding: 13px 44px 0; height: 70px; }
.tab { height: 47px; font-size: 26px; line-height: 36px; padding-bottom: 11px; }
.tab-file { margin-right: 10px; }
.tab.active { font-weight: 600; border-bottom: 6px solid #14695a; padding-bottom: 5px; }
.groups { display: flex; height: 180px; }
.group { display: flex; flex-direction: column; justify-content: space-between; padding-top: 10px; position: relative; }
.group::after { content: ""; position: absolute; right: 0; top: 1px; bottom: 3px; width: 2px; background: #d6d6d6; }
.group h2 { font-size: 19px; line-height: 24px; text-align: center; }
.group-clipboard { width: 320px; }
.group-clipboard .commands { padding-left: 12px; }
.group-data { padding-left: 13px; padding-right: 19px; }
.group-queries { padding-left: 21px; padding-right: 11px; }
.group-insert { padding-left: 14px; padding-right: 14px; }
.group-calc { padding-left: 11px; padding-right: 16px; }
.group-sens { padding-left: 14px; padding-right: 20px; }
.group-share { padding-left: 8px; padding-right: 14px; }
.group-copilot { padding-left: 15px; padding-right: 20px; }
.commands { display: flex; }
.cmd { display: flex; flex-direction: column; align-items: center; gap: 4px; text-align: center; white-space: nowrap; }
.cmd:disabled, .mini-cmd:disabled { color: #bdbdbd; }
.ico { width: 64px; height: 64px; }
.ln { fill: none; stroke: #444; stroke-width: 3; }
.chev { display: inline-block; width: 12px; height: 12px; margin-left: 4px; fill: none; stroke: currentColor; stroke-width: 3; }
.w-thin { width: 78px; }
.w-narrow { width: 84px; }
.w-mid { width: 96px; }
.w-wide { width: 106px; }
.w-xwide { width: 115px; }
.w-max { width: 146px; }
.mini { display: flex; flex-direction: column; gap: 14px; margin-left: 4px; }
.mini-cmd { display: flex; align-items: center; gap: 8px; white-space: nowrap; }
.mini-cmd svg { width: 34px; height: 34px; }

/* Workspace */
.workspace { flex: 1; display: grid; grid-template-columns: 79px minmax(0, 1fr) 363px 33px; }
.rail { background: #f1f1f0; border-right: 2px solid #e0e0e0; }
.rail-btn { display: flex; align-items: center; justify-content: center; width: 100%; height: 80px; padding-right: 4px; border-left: 4px solid transparent; }
.rail-btn.active { border-color: #14695a; }
.rail-btn svg { width: 34px; height: 34px; }
.rail-btn text { font-size: 14px; fill: #666; }
.center { display: flex; flex-direction: column; }
.notice { display: flex; align-items: center; height: 66px; background: #f4f4f3; border-bottom: 2px solid #dcdcdc; padding: 0 20px 0 28px; font-size: 23px; }
.info { width: 32px; height: 32px; margin-right: 16px; }
.notice p { flex: 1; }
.notice-btn { background: #fff; width: 240px; height: 48px; border-radius: 4px; }
.close { margin-left: 30px; width: 24px; height: 20px; }
.close svg { width: 20px; height: 20px; margin: 0 auto; stroke: #555; stroke-width: 2; }
.stage { flex: 1; display: grid; grid-template-columns: minmax(0, 1fr) 622px; background: #fff; }
.canvas { display: flex; justify-content: center; }

/* Report page */
.report { width: 1161px; background: #fff; box-shadow: 0 0 6px 2px rgba(0,0,0,.1); clip-path: inset(0 -12px); }
.banner { margin: 0 51px; height: 232px; background: #466e58; color: #f4faf6; display: flex; justify-content: space-between; padding: 20px 46px 0 41px; }
.banner h1 { font: 500 56px/61px Roboto, sans-serif; }
.banner sup { font-size: 36px; line-height: 0; vertical-align: 16px; margin-left: 2px; }
.banner-left p { display: flex; align-items: center; gap: 12px; margin-top: 4px; padding-left: 3px; font: 300 38px/48px Roboto, sans-serif; color: #cfe0d6; }
.banner-left p svg { width: 40px; height: 36px; }
.banner-right { display: flex; flex-direction: column; align-items: flex-end; }
.epea { width: 182px; height: 66px; }
.epea-name { font: 500 46px Roboto, sans-serif; fill: #f4faf6; }
.epea-sub { font: 400 15px Roboto, sans-serif; fill: #7f9f8e; }
.banner-right p { font-size: 18px; font-weight: 600; line-height: 27px; text-align: right; margin: 23px 14px 0 0; }
.sheet { padding: 25px 98px 0 97px; color: #262626; }
.title { font-size: 43px; line-height: 60px; text-align: center; margin-bottom: 17px; }
hr { border: 0; margin: 0; height: 4px; background: #abbbb5; }
.blank { height: 228px; }
.kpis { display: grid; grid-template-columns: 1fr 1fr; gap: 24px 34px; padding: 17px 4px 33px 0; }
.kpis h3 { font-weight: 600; font-size: 25px; margin-bottom: 28px; }
.donut { width: 160px; height: 160px; margin: 0 auto; }
.donut circle { fill: none; stroke-width: 20; }
.donut .bg { stroke: #e2e2e2; }
.donut .fg { stroke: #466e5c; transform: rotate(-90deg); transform-origin: 80px 80px; }
.donut text { font-size: 36px; text-anchor: middle; fill: #333; }
.partners { display: flex; align-items: flex-end; padding: 37px 14px 28px 5px; }
.conpli { width: 186px; height: 60px; }
.conpli-name { font: 700 43px Roboto, sans-serif; fill: #2f4f48; }
.conpli-sub { font-size: 6px; fill: #888; }
.madaster { width: 54px; height: 60px; margin-left: 21px; }
.madaster text { font-size: 12px; fill: #55838a; }
.sdgs { display: flex; gap: 20px; margin: 0 auto 0 97px; }
.sdgs svg { width: 59px; height: 59px; }
.sdgs text { font: 700 14px "Open Sans", sans-serif; fill: #fff; }
.cap { stroke: rgba(255,255,255,.4); stroke-width: 4; }
.wh { fill: none; stroke: #fff; stroke-width: 2; }
.qr { width: 83px; height: 83px; }

/* Filters pane */
.filters { border-left: 2px solid #b8b8b8; font-size: 23px; }
.search-wrap { padding: 25px 25px 10px 16px; border-bottom: 2px solid #b8b8b8; }
.search { display: flex; align-items: center; gap: 18px; height: 66px; border: 2px solid #ababab; border-radius: 4px; padding: 0 20px; }
.search svg { width: 32px; height: 32px; }
.search input { border: 0; outline: 0; background: none; font: inherit; flex: 1; padding: 0; }
.search input::placeholder { color: #767676; opacity: 1; }
.filters section { padding: 34px 17px 21px 16px; }
.filter-head { display: flex; justify-content: space-between; align-items: center; margin-bottom: 16px; padding-right: 8px; }
.more { width: 24px; height: 4px; margin-top: 6px; background: radial-gradient(circle, #777 2px, transparent 2px) 0 0 / 8px 4px; }
.drop { height: 91px; border: 2px solid #cfcfcf; border-radius: 3px; display: flex; align-items: center; justify-content: center; }
.filter-card { height: 91px; border: 2px solid #c8c8c8; border-radius: 3px; background: #f2f2f1; box-shadow: 0 1px 4px rgba(0,0,0,.15); padding: 8px 16px; margin-bottom: 13px; display: flex; flex-direction: column; gap: 4px; }
.filter-card b { font-size: 22px; }

/* Visualizations pane */
.viz { background: #f2f2f1; border-left: 2px solid #dedede; border-right: 2px solid #dedede; padding-top: 20px; font-size: 23px; }
.viz-head { display: flex; justify-content: space-between; align-items: center; padding: 0 16px 0 15px; line-height: 40px; }
.viz-head h2 { font-size: 29px; font-weight: 600; }
.viz-head svg { width: 26px; height: 26px; fill: none; stroke: #555; stroke-width: 3; }
.build { margin: 16px 15px 7px; font-weight: 500; }
.modes { display: flex; gap: 70px; padding-left: 15px; }
.mode { width: 62px; height: 64px; border-radius: 4px; }
.mode.on { background: #cfcfcd; }
.notch { position: relative; height: 25px; border-bottom: 2px solid #949494; }
.notch::after { content: ""; position: absolute; left: 36px; top: 14px; width: 22px; height: 22px; background: #f2f2f1; border: solid #949494; border-width: 2px 0 0 2px; transform: rotate(45deg); clip-path: polygon(-10% -10%, 110% -10%, -10% 110%); }
.gallery { display: grid; grid-template-columns: repeat(6, 36px); gap: 20px; padding: 22px 21px 0; }
.gallery button, .gallery svg { width: 36px; height: 36px; }
.k { fill: none; stroke: #444; stroke-width: 2; }
.w { fill: #fcfcfc; stroke: #555; stroke-width: 2; }
.b { fill: #76b4ea; stroke: #1f6cb5; stroke-width: 2; }
.g { fill: #c0bebc; stroke: #777; stroke-width: 2; }
.o { fill: #f0a850; stroke: #d9761a; stroke-width: 2; }
.bl { fill: none; stroke: #3f87b8; stroke-width: 2; }
.bs { stroke: #2b7cd0; }
.num { font-size: 16px; fill: #5a8fc8; }
.script { font-weight: 700; font-size: 30px; line-height: 36px; color: #2a84c0; text-align: center; }
.dots { display: block; width: 36px; height: 36px; margin: 18px 21px 16px; background: radial-gradient(circle, #444 2px, transparent 3px) 0 0 / 12px 36px; }
.custom { margin: 0 11px; border-top: 2px dashed #dcdcdc; padding: 14px 10px 18px; }
.custom svg { width: 36px; height: 36px; }
.wells { border-top: 2px solid #d6d6d6; padding: 18px 11px 0 7px; }
.wells h4 { padding-left: 16px; }
.wells .strong { font-weight: 500; margin: 22px 0 19px; }
.well { height: 55px; border: 2px dashed #c4c4c4; background: #fff; margin-top: 12px; padding: 0 20px; display: flex; align-items: center; white-space: nowrap; }
.well-drill { height: 52px; background: #fbfbfa; padding: 0 16px; margin-top: 0; }
.switch { display: flex; justify-content: space-between; align-items: center; padding: 0 32px 0 16px; height: 32px; margin-bottom: 21px; }
.toggle { position: relative; display: flex; }
.toggle input { appearance: none; margin: 0; width: 65px; height: 32px; border: 2px solid #777; border-radius: 16px; background: radial-gradient(circle at 16px 14px, #5c5c5c 8px, transparent 9px) #fff; }
.toggle input:checked { border-color: #0f6b5c; background: radial-gradient(circle at 44px 14px, #fff 8px, transparent 9px) #0f6b5c; }
.toggle i { position: absolute; right: 8px; top: 0; font-style: normal; font-size: 17px; color: #666; }
.toggle input:checked + i { right: auto; left: 10px; color: #fff; }

/* Data pane, collapsed against the window edge */
.data { background: #f2f2f1; padding: 20px 0 0 18px; overflow: hidden; }
.data h2 { font-size: 28px; font-weight: 600; line-height: 40px; }
.data-search { margin: 31px 0 0 -8px; width: 60px; height: 46px; background: #fff; border: 2px solid #c8c8c8; border-radius: 5px; }
.data ul { list-style: none; margin: 34px 0 0 12px; }
.data li { width: 6px; height: 4px; background: #b8b8b8; margin-bottom: 40px; }
```
FILE: qr.js
```js
// Fills the QR symbol: three finder squares and a fixed field of modules.
(function () {
  var size = 41, seed = 20250625, d = "";
  function next() {
    seed = (seed * 1103515245 + 12345) % 2147483648;
    return seed / 2147483648;
  }
  function finder(x, y) {
    return "M" + x + " " + y + "h9v9h-9zm1 1v7h7v-7zm2 2h3v3h-3z";
  }
  for (var y = 0; y < size; y++) {
    for (var x = 0; x < size; x++) {
      var on = next() < 0.55;
      var corner = (x < 10 && y < 10) || (x > size - 11 && y < 10) || (x < 10 && y > size - 11);
      if (on && !corner) d += "M" + x + " " + y + "h1v1h-1z";
    }
  }
  d += finder(0, 0) + finder(size - 9, 0) + finder(0, size - 9);
  var path = document.createElementNS("http://www.w3.org/2000/svg", "path");
  path.setAttribute("d", d);
  path.setAttribute("fill-rule", "evenodd");
  path.setAttribute("fill", "#1c1c1c");
  document.getElementById("qr").appendChild(path);
})();
```
